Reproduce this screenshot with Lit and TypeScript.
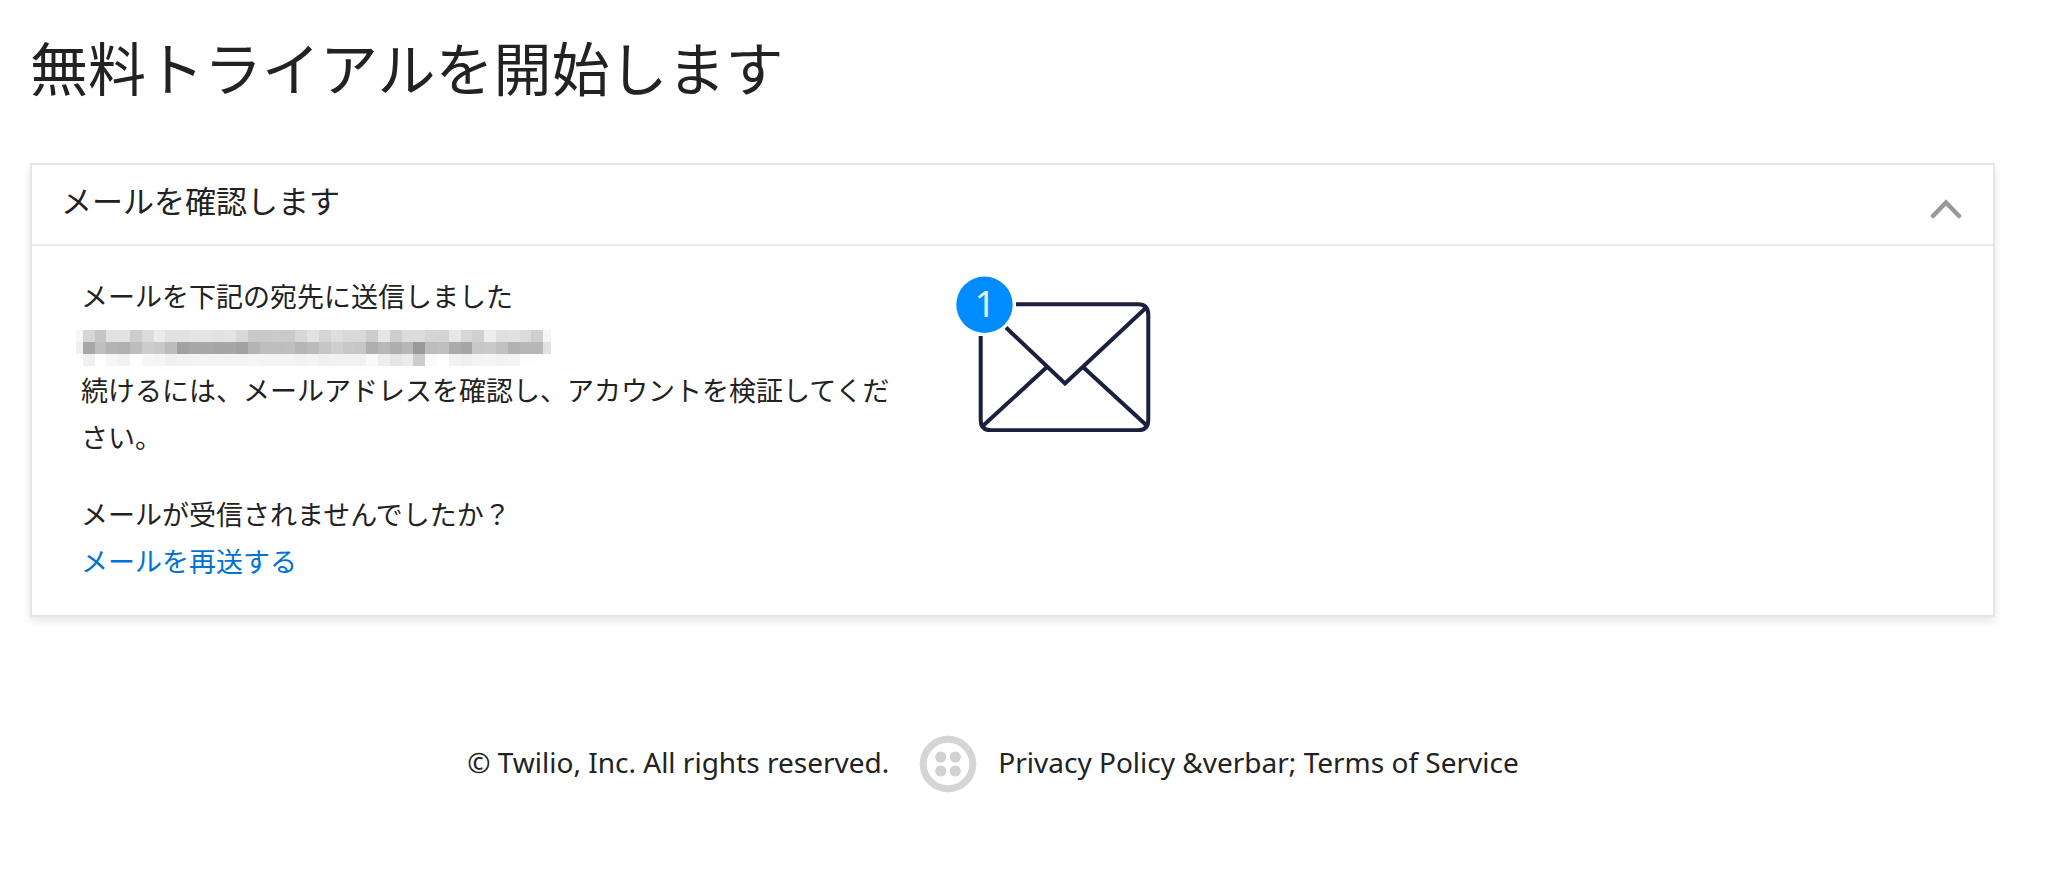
import { LitElement, html, svg, css } from "lit";
import { customElement, state } from "lit/decorators.js";

// Grey levels of the masked address, two hex digits per cell, one string per row.
const MASK_ROWS = [
  "d6c5e2e2cddbece1e1e4e4e2e4d9c9c9cac9d6e2d5ded9d9cce5cddcddd5d4e7d6d1eddfe1dccf",
  "a7bfb3b0bdccc8bca1a7a8a5a7a2b4bebdbeb5bbc6cfc8c6afb8aeb79abdc0aba5c8c9c1b2b8b8",
  "f0fff6f1fff6f5f0f2f3f3f3f3f3f6f4f4f4f2f4f0f1f1f1f9eee6ecccfafff2eff4f5f2f3fdfe",
];

@customElement("masked-address")
export class MaskedAddress extends LitElement {
  static styles = css`
    :host { display: block; margin-left: -5px; }
    svg { display: block; overflow: visible; }
  `;

  render() {
    const size = 12;
    return html`<svg width="476" height="47" viewBox="0 0 484 47" preserveAspectRatio="none"
      shape-rendering="crispEdges" role="img" aria-label="メールアドレス">
      <rect x="0" y="11" width="7" height="12" fill="#f7f7f7"></rect>
      <rect x="0" y="23" width="7" height="12" fill="#f0f0f0"></rect>
      <rect x="475" y="11" width="8" height="12" fill="#f5f5f5"></rect>
      <rect x="475" y="23" width="8" height="12" fill="#e2e2e2"></rect>
      ${MASK_ROWS.map((row, r) =>
        row.match(/../g)!.map(
          (v, c) => svg`<rect x=${7 + c * size} y=${11 + r * size} width=${size} height=${size} fill="#${v}${v}${v}"></rect>`
        )
      )}
    </svg>`;
  }
}

@customElement("app-root")
export class AppRoot extends LitElement {
  @state() private open = true;

  static styles = css`
    :host {
      display: block;
      color: #222;
      background: #fff;
      font-family: "Noto Sans", "Noto Sans CJK JP", sans-serif;
    }
    * { box-sizing: border-box; }
    main { padding: 26px 53px 0 30px; }
    h1, h2, p { margin: 0; font-weight: 400; }
    .jp { font-family: "Noto Sans CJK JP", sans-serif; }
    .title { font-size: 58px; line-height: 80px; margin-bottom: 57px; }
    .card {
      border: 2px solid #e6e6e6;
      box-shadow: 0 4px 8px rgba(0, 0, 0, 0.1);
    }
    .toggle {
      display: flex;
      justify-content: space-between;
      align-items: center;
      width: 100%;
      padding: 10px 31px 19px 29px;
      border: 0;
      background: none;
      color: inherit;
      font: inherit;
      font-size: 31px;
      line-height: 50px;
      text-align: left;
      cursor: pointer;
    }
    .chevron { margin-top: 18px; }
    .body {
      display: flex;
      align-items: flex-start;
      gap: 55px;
      padding: 26px 49px 31px;
      border-top: 2px solid #ebebeb;
      font-size: 27px;
      line-height: 47px;
    }
    .copy { flex: 0 0 44%; display: grid; gap: 30px; }
    .body[hidden] { display: none; }
    a { color: inherit; text-decoration: none; }
    a:hover { text-decoration: underline; }
    .resend { color: #0072d6; }
    .badge { font-family: "Noto Sans", sans-serif; font-size: 37px; }
    footer {
      display: flex;
      justify-content: center;
      align-items: center;
      padding: 118px 62px 80px 0;
      font-size: 28px;
      line-height: 38px;
    }
    footer span { padding-bottom: 4px; }
    .logo { margin: 0 21px 0 30px; }
    svg { display: block; flex: none; }
  `;

  render() {
    return html`
      <main class="jp" lang="ja">
        <h1 class="title">無料トライアルを開始します</h1>
        <section class="card">
          <h2>
            <button class="toggle" aria-expanded=${this.open} aria-controls="verify" @click=${() => (this.open = !this.open)}>
              メールを確認します
              <svg class="chevron" width="32" height="20" viewBox="0 0 32 20" aria-hidden="true">
                <path d="M3 17 16 3.500 29 17" fill="none" stroke="#999" stroke-width="4.500" stroke-linecap="round"></path>
              </svg>
            </button>
          </h2>
          <div class="body" id="verify" ?hidden=${!this.open}>
            <div class="copy">
              <div>
                <p>メールを下記の宛先に送信しました</p>
                <masked-address></masked-address>
                <p>続けるには、メールアドレスを確認し、アカウントを検証してください。</p>
              </div>
              <div>
                <p>メールが受信されませんでしたか？</p>
                <p><a class="resend" href="#resend">メールを再送する</a></p>
              </div>
            </div>
            <svg width="196" height="160" viewBox="0 -4 196 160" aria-hidden="true">
              <g fill="none" stroke="#1b2040" stroke-width="4" stroke-linejoin="miter">
                <path d="M60 28.300H182Q192.300 28.300 192.300 39V144Q192.300 154.300 182 154.300H35Q24.700 154.300 24.700 144V60"></path>
                <path d="M50 51.500 109 107.500 190 31.700M90.700 91.300 27.300 149.500M127.300 91.300 190.700 149.500"></path>
              </g>
              <circle cx="28.500" cy="28.700" r="28.200" fill="#008cff"></circle>
              <text class="badge" x="29" y="41" text-anchor="middle" fill="#e4f2ff">1</text>
            </svg>
          </div>
        </section>
      </main>
      <footer>
        <span>© Twilio, Inc. All rights reserved.</span>
        <svg class="logo" width="58" height="58" viewBox="0 0 58 58" aria-hidden="true">
          <circle cx="29" cy="29" r="24.800" fill="none" stroke="#d5d5d5" stroke-width="7"></circle>
          <g fill="#d0d0d0">
            <circle cx="21.700" cy="22" r="5.500"></circle>
            <circle cx="36.300" cy="22" r="5.500"></circle>
            <circle cx="21.700" cy="36" r="5.500"></circle>
            <circle cx="36.300" cy="36" r="5.500"></circle>
          </g>
        </svg>
        <span><a href="#privacy">Privacy Policy</a> &amp;verbar; <a href="#terms">Terms of Service</a></span>
      </footer>
    `;
  }
}
